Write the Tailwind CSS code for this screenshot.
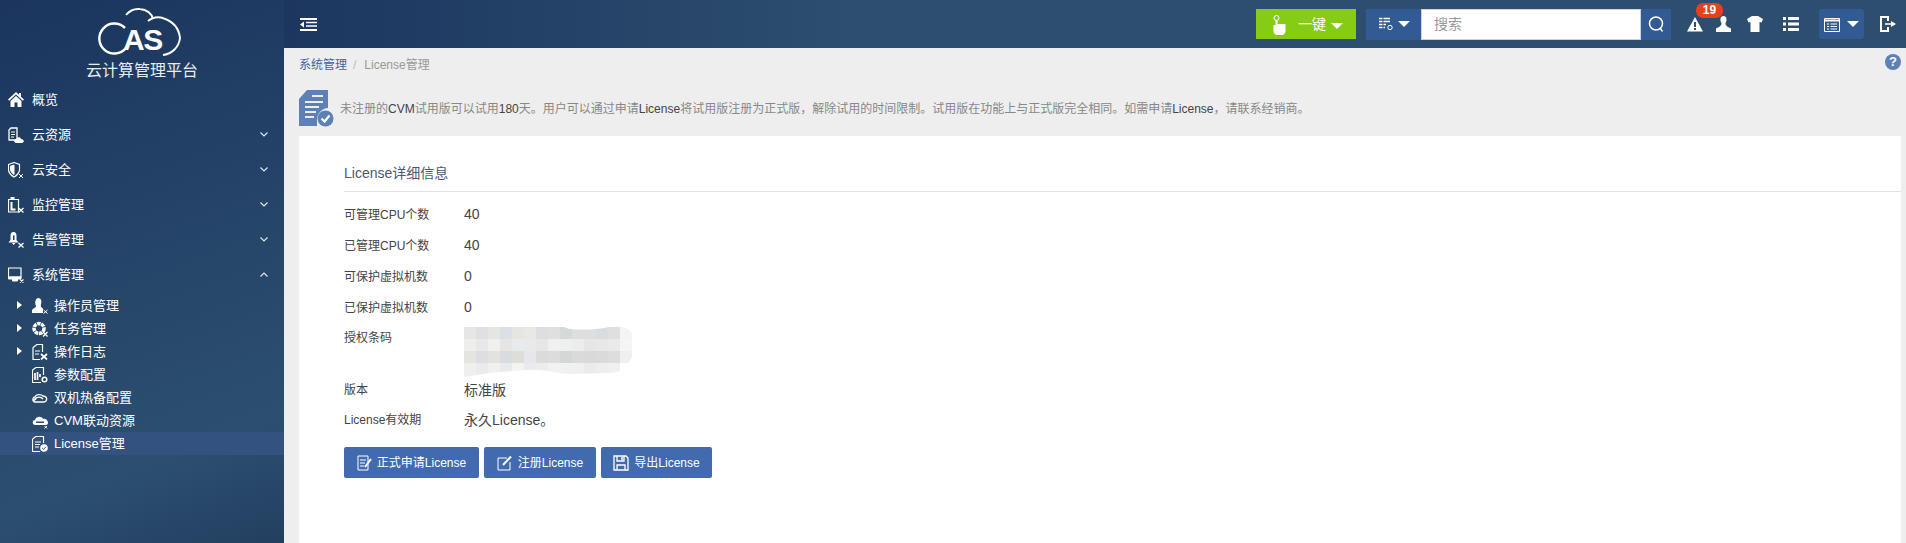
<!DOCTYPE html>
<html lang="en">
<head>
    <meta charset="UTF-8">
    <title>License管理</title>
    <script src="https://cdn.jsdelivr.net/npm/@tailwindcss/browser@4"></script>
</head>
<body class="h-[543px] overflow-hidden bg-[#eeeeee] font-['Liberation_Sans','Noto_Sans_CJK_SC',sans-serif]">
<div class="flex h-[543px]">
    <!-- Sidebar -->
    <aside class="w-[284px] shrink-0 flex flex-col text-white text-[13px] bg-[linear-gradient(160deg,#1b355e_0%,#2c4f70_80%,#233f60_100%)]">
        <div class="h-[82px] flex flex-col items-center">
            <div class="relative h-[55px] w-[90px] mt-[7px] -ml-[2px]">
                <svg class="absolute left-0 top-0" width="90" height="50" viewBox="0 0 90 50" fill="none" stroke="white" stroke-width="2">
                    <path d="M29 21A15 15 0 1 0 30 41" stroke-width="2.500"/>
                    <path d="M30 8C34 3 39 1.500 44 2C51 2.500 56 7 57 12"/>
                    <path d="M52 14C57 10 63 9.500 68 11.500C78 15 83 22 84 31C83 40 76 47 67 48"/>
                </svg>
                <span class="absolute left-[27px] top-[18px] text-[30px] leading-[30px] font-bold tracking-[-1.500px]">AS</span>
            </div>
            <div class="text-[16px] leading-[20px] -mt-[1px] text-[#e8edf2]">云计算管理平台</div>
        </div>
        <a class="h-[35px] flex items-center pl-[8px]">
            <svg class="w-[16px] h-[15px] mr-[8px]" viewBox="0 0 16 15" fill="white"><path d="M8 0L0 7.500L1.200 8.700L8 2.500L14.800 8.700L16 7.500L13 4.700V1H11V2.800ZM8 4L2.500 9V15H6.500V10.500H9.500V15H13.500V9Z"/></svg>
            <span>概览</span>
        </a>
        <a class="h-[35px] flex items-center pl-[8px] pr-[16px]">
            <svg class="w-[16px] h-[16px] mr-[8px]" viewBox="0 0 16 16" fill="none" stroke="white"><path d="M1 3L3 1H9V13H1Z" stroke-width="1.300"/><path d="M3 5H7M3 7.500H7M3 10H6" /><path d="M8 15.500C6 15.500 6 12.500 8 12.500C9 10 12.500 10 13 12.500C16 12.500 16 15.500 14 15.500Z" fill="white"/></svg>
            <span class="flex-1">云资源</span>
            <svg width="8" height="5" viewBox="0 0 8 5" fill="none" stroke="#dfe6ee" stroke-width="1.200"><path d="M.500 .500L4 4L7.500 .500"/></svg>
        </a>
        <a class="h-[35px] flex items-center pl-[8px] pr-[16px]">
            <svg class="w-[16px] h-[16px] mr-[8px]" viewBox="0 0 16 16" fill="none" stroke="white"><path d="M.500 2.500L6 .500L11.500 2.500V8C11.500 11 8 14 6 15C4 14 .500 11 .500 8Z" stroke-width="1.200"/><path d="M6 3V12.500C4 11.500 2.500 9 2.500 7.500V4.200Z" fill="white"/><path d="M11 12L15 16M15 12L11 16"/></svg>
            <span class="flex-1">云安全</span>
            <svg width="8" height="5" viewBox="0 0 8 5" fill="none" stroke="#dfe6ee" stroke-width="1.200"><path d="M.500 .500L4 4L7.500 .500"/></svg>
        </a>
        <a class="h-[35px] flex items-center pl-[8px] pr-[16px]">
            <svg class="w-[16px] h-[16px] mr-[8px]" viewBox="0 0 16 16" fill="none" stroke="white"><path d="M.500 2.500H10.500V15H.500Z" stroke-width="1.200"/><path d="M3 0H6V2.500H3Z" fill="white"/><path d="M3.500 5V12.500H7.500" stroke-width="2"/><path d="M10.500 11L15.500 15.500M15.500 11L10.500 15.500" stroke-width="1.300"/></svg>
            <span class="flex-1">监控管理</span>
            <svg width="8" height="5" viewBox="0 0 8 5" fill="none" stroke="#dfe6ee" stroke-width="1.200"><path d="M.500 .500L4 4L7.500 .500"/></svg>
        </a>
        <a class="h-[35px] flex items-center pl-[8px] pr-[16px]">
            <svg class="w-[16px] h-[16px] mr-[8px]" viewBox="0 0 16 16" fill="white"><path fill-rule="evenodd" d="M5.500 0C8 0 8.500 2 8.500 4V8L10.500 10.500H.500L2.500 8V4C2.500 2 3 0 5.500 0ZM5 3.500V8H6.500V3.500Z"/><path d="M4 11H7.500L5.500 13Z"/><path d="M10.500 11L15.500 15.500M15.500 11L10.500 15.500" stroke="white" stroke-width="1.300" fill="none"/></svg>
            <span class="flex-1">告警管理</span>
            <svg width="8" height="5" viewBox="0 0 8 5" fill="none" stroke="#dfe6ee" stroke-width="1.200"><path d="M.500 .500L4 4L7.500 .500"/></svg>
        </a>
        <a class="h-[35px] flex items-center pl-[8px] pr-[16px]">
            <svg class="w-[16px] h-[16px] mr-[8px]" viewBox="0 0 16 16" fill="none" stroke="white"><path d="M.500 1H13V10H.500Z" stroke-width="1.200"/><path d="M.500 10H13V12H.500ZM4.500 12H9.500V14H4.500Z" fill="white"/><path d="M12 12.500L15.500 15.500M15.500 12.500L12 15.500" stroke-width="1.200"/></svg>
            <span class="flex-1">系统管理</span>
            <svg width="8" height="5" viewBox="0 0 8 5" fill="none" stroke="#dfe6ee" stroke-width="1.200"><path d="M.500 4.500L4 1L7.500 4.500"/></svg>
        </a>

        <!-- System submenu -->
        <div class="pt-[2px]">
            <a class="relative h-[23px] flex items-center pl-[32px]">
                <span class="absolute left-[17px] top-[7px] border-y-[4px] border-l-[5px] border-y-transparent border-l-white"></span>
                <svg class="w-[16px] h-[16px] mr-[6px]" viewBox="0 0 16 16" fill="white"><path d="M6 0C9 0 10 3 9 6C8.500 8 8.500 9 11 10.500V15H0V12.500C0 10.500 4 10 4 8C3 6 2.500 1 6 0Z"/><path d="M11.500 12L15.500 15.500M15.500 12L11.500 15.500" stroke="white" fill="none"/></svg>
                <span>操作员管理</span>
            </a>
            <a class="relative h-[23px] flex items-center pl-[32px]">
                <span class="absolute left-[17px] top-[7px] border-y-[4px] border-l-[5px] border-y-transparent border-l-white"></span>
                <svg class="w-[16px] h-[16px] mr-[6px]" viewBox="0 0 16 16" fill="none" stroke="white"><circle cx="7" cy="7.500" r="5" stroke-width="3.500" stroke-dasharray="3.500 .700"/><path d="M11 11L15.500 15.500M15.500 11L11 15.500" stroke-width="1.300"/></svg>
                <span>任务管理</span>
            </a>
            <a class="relative h-[23px] flex items-center pl-[32px]">
                <span class="absolute left-[17px] top-[7px] border-y-[4px] border-l-[5px] border-y-transparent border-l-white"></span>
                <svg class="w-[16px] h-[16px] mr-[6px]" viewBox="0 0 16 16" fill="none" stroke="white"><path d="M1 3.500L5 .500H10.500V8M1 3.500V15.500H8" stroke-width="1.200"/><path d="M3 7H8M3 10H7" stroke-width="1.200"/><path d="M9 10L15 15.500M15 10L9 15.500" stroke-width="1.700"/></svg>
                <span>操作日志</span>
            </a>
            <a class="h-[23px] flex items-center pl-[32px]">
                <svg class="w-[16px] h-[16px] mr-[6px]" viewBox="0 0 16 16" fill="none" stroke="white"><path d="M.500 3L4 .500H11.500V8M.500 3V15.500H9" stroke-width="1.200"/><path d="M3 6V13M5.500 5V13M8 7V10" stroke-width="1.700"/><circle cx="12.500" cy="12.500" r="2.300" stroke-width="1.500"/></svg>
                <span>参数配置</span>
            </a>
            <a class="h-[23px] flex items-center pl-[32px]">
                <svg class="w-[16px] h-[16px] mr-[6px]" viewBox="0 0 16 16" fill="none" stroke="white" stroke-width="1.300"><path d="M2 12C0 10 1 7 3 7C4 4 9 4 11 6C14 6 15 8 14.500 10C14 12 13 12 12 12H2"/><path d="M3 9C5 6.500 9 6.500 11 9" /><path d="M1 11L4 8.500" stroke-width="1.700"/></svg>
                <span>双机热备配置</span>
            </a>
            <a class="h-[23px] flex items-center pl-[32px]">
                <svg class="w-[16px] h-[16px] mr-[6px]" viewBox="0 0 16 16" fill="white"><path d="M3 12C0 12 0 7 3 7C4 3 10 3 11 6C14 5 16 8 16 10C16 11 15 12 14 12Z"/><path d="M4 8.500H12V10H4Z" fill="#2b4c70"/><path d="M12.500 13L15 15.500M15 13L12.500 15.500" stroke="white" fill="none"/></svg>
                <span>CVM联动资源</span>
            </a>
            <a class="h-[23px] flex items-center pl-[32px] bg-[#34527f]">
                <svg class="w-[16px] h-[16px] mr-[6px]" viewBox="0 0 16 16" fill="none" stroke="white"><path d="M.500 3L4 .500H11.500V7M.500 3V15.500H8" stroke-width="1.200"/><path d="M3 6H9M3 8.500H8M3 11H7" stroke-width="1.200"/><circle cx="12" cy="12" r="3.800" fill="white" stroke="none"/><path d="M10.200 12L11.600 13.400L13.900 10.800" stroke="#34527f"/></svg>
                <span>License管理</span>
            </a>
        </div>
    </aside>

    <div class="flex-1 min-w-0 flex flex-col">
        <!-- Top bar -->
        <header class="h-[48px] shrink-0 flex items-center pr-[10px] text-white bg-gradient-to-r from-[#1c3660] via-[#2d4e6e] via-[35%] to-[#2d4e6e]">
            <svg class="ml-[16px] w-[17px] h-[13px]" viewBox="0 0 17 13" fill="white"><path d="M0 0H17V2H0ZM6 3.700H17V5.200H6ZM6 7.200H17V8.700H6ZM0 11H17V13H0ZM4 3.500V9.500L0 6.500Z"/></svg>
            <div class="flex-1"></div>

            <button class="relative shrink-0 w-[100px] h-[30px] bg-[#87cc14] text-[14px] leading-[30px] text-left pl-[42px]">
                <svg class="absolute left-[17px] top-[6px]" width="13" height="20" viewBox="0 0 13 20" fill="white"><circle cx="3.500" cy="3" r="2.500" fill="none" stroke="white"/><path d="M2.500 5H4.500V9H12.500V16C12.500 18 11 20 9 20H4C2 20 .500 18 .500 16V10H2.500Z"/></svg>
                <span>一键</span>
                <span class="absolute left-[75px] top-[14px] border-x-[6px] border-t-[6px] border-x-transparent border-t-white"></span>
            </button>

            <div class="ml-[10px] shrink-0 flex h-[31px]">
                <div class="w-[55px] flex items-center justify-center gap-[4px] bg-[#315b92]">
                    <svg width="16" height="14" viewBox="0 0 16 14" fill="none" stroke="white"><path d="M1 1.500H12M1 4.500H12M1 7.500H8M1 10.500H7" stroke-width="1.600"/><path d="M5 0V12" stroke="#315b92"/><circle cx="12" cy="10.500" r="2.200"/></svg>
                    <span class="border-x-[6px] border-t-[6px] border-x-transparent border-t-white"></span>
                </div>
                <div class="w-[220px] bg-white border border-[#ccd3dc] flex items-center pl-[12px] text-[14px] text-[#999999]">搜索</div>
                <div class="w-[30px] flex items-center justify-center bg-[#315b92]">
                    <svg width="16" height="16" viewBox="0 0 16 16" fill="none" stroke="white" stroke-width="1.500"><circle cx="8" cy="7.500" r="6.500"/><path d="M12 12L14.500 15.500"/></svg>
                </div>
            </div>

            <div class="relative shrink-0 ml-[16px] w-[16px] h-[15px]">
                <svg class="w-[16px] h-[15px]" viewBox="0 0 16 15" fill="white"><path fill-rule="evenodd" d="M8 0L16 14.500H0ZM7 5V10H9V5ZM7 11V13H9V11Z"/></svg>
                <span class="absolute left-[9px] -top-[14px] w-[27px] h-[15px] rounded-[7px] bg-[#e8401c] text-[12px] leading-[15px] font-bold text-center">19</span>
            </div>
            <svg class="ml-[13px] shrink-0" width="15" height="16" viewBox="0 0 15 16" fill="white"><path d="M7.500 0C11 0 11 4 10 6C9 8 9 10 15 12.500V16H0V12.500C6 10 6 8 5 6C4 4 4 0 7.500 0Z"/></svg>
            <svg class="ml-[16px] shrink-0" width="16" height="16" viewBox="0 0 16 16" fill="white"><path d="M5 0H11L16 3L14.500 6.500L12.500 6V16H3.500V6L1.500 6.500L0 3Z"/></svg>
            <svg class="ml-[20px] shrink-0" width="16" height="14" viewBox="0 0 16 14" fill="white"><path d="M0 0H3V3H0ZM5 0H16V3H5ZM0 5.500H3V8.500H0ZM5 5.500H16V8.500H5ZM0 11H3V14H0ZM5 11H16V14H5Z"/></svg>
            <div class="relative ml-[20px] shrink-0 w-[45px] h-[30px] rounded-[3px] bg-[#315b92]">
                <svg class="absolute left-[5px] top-[9px]" width="16" height="14" viewBox="0 0 16 14" fill="none" stroke="white"><path d="M.500 .500H15.500V13.500H.500Z"/><path d="M.500 2.500H15.500" stroke-width="2"/><path d="M3 6H5M6.500 6H13M3 8.500H5M6.500 8.500H13M3 11H5M6.500 11H13"/></svg>
                <span class="absolute left-[28px] top-[12px] border-x-[6px] border-t-[6px] border-x-transparent border-t-white"></span>
            </div>
            <svg class="ml-[16px] shrink-0" width="16" height="16" viewBox="0 0 16 16" fill="none" stroke="white" stroke-width="2"><path d="M8 5V1H1V15H8V11"/><path d="M5 8H12" stroke-width="1.500"/><path d="M11 5L16 8L11 11Z" fill="white" stroke="none"/></svg>
        </header>

        <main class="flex-1 min-h-0 flex flex-col pl-[15px] pr-[5px] relative">
            <nav class="h-[34px] flex items-center text-[12px] text-[#999999]">
                <span class="text-[#3f62a8]">系统管理</span>
                <span class="ml-[6px] mr-[8px] text-[#bbbbbb]">/</span>
                <span>License管理</span>
            </nav>
            <span class="absolute right-[5px] top-[6px] w-[16px] h-[16px] rounded-full bg-[#5d80b6] text-white text-[13px] leading-[16px] font-bold text-center">?</span>

            <div class="h-[54px] flex items-center">
                <svg class="w-[35px] h-[37px] mt-[-1px]" viewBox="0 0 35 37" fill="#5d80b6"><path fill-rule="evenodd" d="M8 0H29V18C23 18 18 24 18 30V36H0V9ZM6 11V13H24V11ZM6 16V18H20V16ZM6 21V23H17V21ZM6 26V28H15V26ZM13 5V7H24V5Z"/><circle cx="26.500" cy="28.500" r="8"/><path d="M22.500 28.500L25.500 31.500L30.500 25.500" fill="none" stroke="white" stroke-width="2.200"/></svg>
                <p class="ml-[6px] text-[12px] text-[#888888]">未注册的<span class="text-[#444444]">CVM</span>试用版可以试用<span class="text-[#444444]">180</span>天。用户可以通过申请<span class="text-[#444444]">License</span>将试用版注册为正式版，解除试用的时间限制。试用版在功能上与正式版完全相同。如需申请<span class="text-[#444444]">License</span>，请联系经销商。</p>
            </div>

            <section class="flex-1 bg-white pl-[45px]">
                <h2 class="h-[56px] pt-[27px] text-[14px] leading-[20px] text-[#4a5872] border-b border-[#e3e3e3]">License详细信息</h2>
                <dl class="pt-[7px] text-[#444444]">
                    <div class="h-[31px] flex items-center"><dt class="w-[120px] text-[12px]">可管理CPU个数</dt><dd class="text-[14px]">40</dd></div>
                    <div class="h-[31px] flex items-center"><dt class="w-[120px] text-[12px]">已管理CPU个数</dt><dd class="text-[14px]">40</dd></div>
                    <div class="h-[31px] flex items-center"><dt class="w-[120px] text-[12px]">可保护虚拟机数</dt><dd class="text-[14px]">0</dd></div>
                    <div class="h-[31px] flex items-center"><dt class="w-[120px] text-[12px]">已保护虚拟机数</dt><dd class="text-[14px]">0</dd></div>
                    <div class="h-[52px] flex">
                        <dt class="w-[120px] text-[12px] leading-[31px]">授权条码</dt>
                        <dd class="relative mt-[4px] w-[168px] h-[50px]">
                            <div id="mosaic" class="w-[168px] h-[50px] grid grid-cols-14 grid-rows-[12px_12px_12px_14px]"></div>
                            <!-- soft edge of the blur -->
                            <svg class="absolute left-0 top-0" width="168" height="50" viewBox="0 0 168 50" fill="white"><path d="M100 0C104 2 108 2.500 118 2.500C128 2.500 136 2 145 0ZM156 0C162 0 168 3 168 8V0ZM168 30C165 36 160 46 145 46C130 46 120 47 105 47C90 47 85 42 65 43C45 44 20 46 0 50H168Z"/></svg>
                        </dd>
                    </div>
                    <div class="h-[30px] flex items-center"><dt class="w-[120px] text-[12px]">版本</dt><dd class="text-[14px]">标准版</dd></div>
                    <div class="h-[30px] flex items-center"><dt class="w-[120px] text-[12px]">License有效期</dt><dd class="text-[14px]">永久License。</dd></div>
                </dl>
                <div class="mt-[12px] flex gap-[5px] text-white text-[12px]">
                    <button class="w-[135px] h-[31px] flex items-center justify-center gap-[4px] rounded-[2px] bg-[#426aaf]">
                        <svg width="16" height="16" viewBox="0 0 16 16" fill="none" stroke="white"><path d="M1 1H11V15H1Z"/><path d="M3 5H9M3 8H8M3 11H7"/><path d="M8 12L14 4" stroke-width="2"/></svg>
                        <span>正式申请License</span>
                    </button>
                    <button class="w-[112px] h-[31px] flex items-center justify-center gap-[5px] rounded-[2px] bg-[#426aaf]">
                        <svg width="16" height="16" viewBox="0 0 16 16" fill="none" stroke="white"><path d="M10 3H1V15H13V7"/><path d="M6 10L14 1.500" stroke-width="2"/></svg>
                        <span>注册License</span>
                    </button>
                    <button class="w-[111px] h-[31px] flex items-center justify-center gap-[5px] rounded-[2px] bg-[#426aaf]">
                        <svg width="16" height="16" viewBox="0 0 16 16" fill="none" stroke="white" stroke-width="1.300"><path d="M1 1H13L15 3V15H1Z"/><path d="M4 1V6H11V1M4 15V10H12V15"/><path d="M9 2V5" stroke-width="1.500"/></svg>
                        <span>导出License</span>
                    </button>
                </div>
            </section>
        </main>
    </div>
</div>
<script>
    // Blurred licence code, one grey per mosaic cell
    var shades = [
        '#e6e6e4','#dfdfe4','#e5e5e3','#dcdfe3','#e6e5e1','#e8e8e6','#dcdee2','#dfdfe0','#d6d9d9','#dedede','#dededf','#d9dcdf','#dfdfdf','#f2f4f7',
        '#eeeeec','#e7e8ec','#f0f0ee','#e6e5e3','#e8ebee','#e9e9ea','#e5e6e7','#f0f0f0','#eef0f0','#ebecec','#e6e6e6','#e8e8e9','#eaeaea','#f3f5f7',
        '#e4e4e0','#dddde2','#e2e2de','#d9dcdf','#dddeda','#e5e7ea','#dbdbdc','#dcdcdc','#d3d7d6','#d9dad9','#dad9d7','#d8dadc','#dedcdf','#eef0f0',
        '#efefed','#ebebee','#f0f0ee','#eaeaea','#f2f4f2','#eaeaeb','#ececec','#f2f2f2','#f0f2f2','#f0f0ee','#ebebeb','#eeeeee','#f0f0f0','#ffffff'
    ];
    var mosaic = document.getElementById('mosaic');
    shades.forEach(function (color) {
        var cell = document.createElement('div');
        cell.style.background = color;
        mosaic.appendChild(cell);
    });
</script>
</body>
</html>
